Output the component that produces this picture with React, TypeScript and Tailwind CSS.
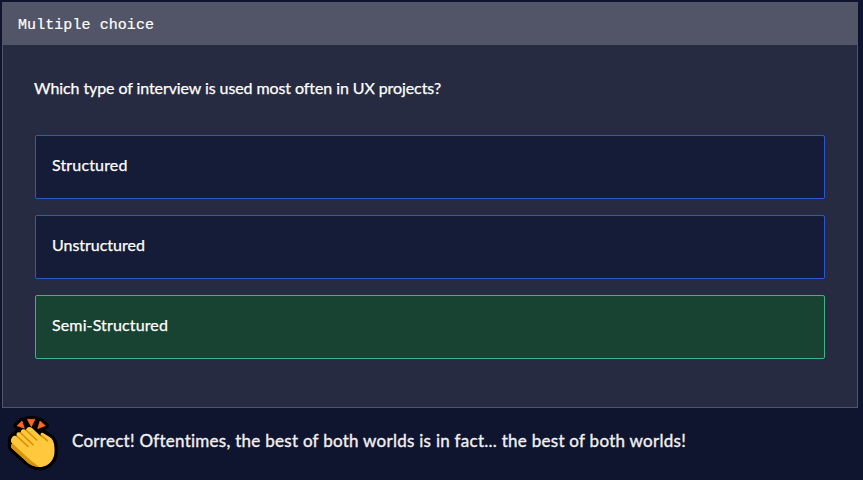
const options = [
  { label: "Structured", track: "tracking-[0.15px]", correct: false },
  { label: "Unstructured", track: "tracking-[-0.02px]", correct: false },
  { label: "Semi-Structured", track: "tracking-[0.13px]", correct: true },
];

const hand =
  "M24 77C27 70 34 70 40 74C33 65 42 57 51 63C48 54 58 48 66 55C66 46 77 42 84 48L112 74C106 65 113 59 121 65L137 75C147 81 150 91 151 103C152 117 153 131 145 143C132 163 110 170 89 161C79 158 72 153 66 147L26 111C19 105 20 98 25 95C19 90 20 82 24 77Z";

const sparks = "M39 41L54 27L61 49ZM70 22H93L82 44ZM108 27L124 41L101 50Z";

function ClapIcon() {
  return (
    <svg viewBox="0 0 180 192" className="h-16 w-[60px] shrink-0" aria-hidden="true">
      <g stroke="#000" strokeWidth="20" strokeLinejoin="round" fill="#000">
        <path d={sparks} />
        <path d={hand} />
        <path d="M50 55L66 42L98 44L120 58" />
      </g>
      <path d={sparks} fill="#ff6723" stroke="#ff6723" strokeWidth="2" strokeLinejoin="round" />
      <path d={hand} fill="#ffc83d" />
      <path
        d="M24 77C20 83 20 90 27 96L65 131C77 143 89 151 105 164C88 165 75 157 66 147L26 111C19 105 20 98 25 95C19 90 20 82 24 77Z"
        fill="#d8920b"
      />
      <path d="M24 77C20 84 24 90 30 95L62 124L68 119L27 81Z" fill="#ffc83d" />
      <path
        d="M40 74L72 103M50 63L87 98M67 55L98 84M112 71L130 86"
        fill="none"
        stroke="#d8920b"
        strokeWidth="5"
        strokeLinecap="round"
      />
    </svg>
  );
}

export default function App() {
  return (
    <main className="flex h-[480px] w-[863px] flex-col bg-[#10152f] pt-0.5 pl-0.5 font-['Lato',sans-serif] text-white">
      <section className="h-[406px] w-[856px] border border-[#515567] bg-[#272b41]">
        <header className="flex h-[42px] items-center bg-[#515567] pt-[5px] pl-[15px] font-['Liberation_Mono',monospace] text-[15px] tracking-[0.07px] [-webkit-text-stroke:0.2px_white]">
          Multiple choice
        </header>
        <div className="px-8 pt-[31px] [-webkit-text-stroke:0.25px_white]">
          <h1 className="-ml-px text-base leading-6 font-normal tracking-[-0.09px]">
            Which type of interview is used most often in UX projects?
          </h1>
          <div className="mt-[35px] flex flex-col gap-4">
            {options.map((o) => (
              <button
                key={o.label}
                className={`flex h-16 items-center rounded-xs border px-4 pb-1 text-left text-base ${o.track} ${
                  o.correct ? "border-[#3bb588] bg-[#184232]" : "border-[#2959ca] bg-[#151c37]"
                }`}
              >
                {o.label}
              </button>
            ))}
          </div>
        </div>
      </section>
      <footer className="flex items-start pt-1 pl-0.5">
        <ClapIcon />
        <p className="mt-[17px] ml-2 text-[17px] leading-6 tracking-[0.27px] text-[#f1f1f4] [-webkit-text-stroke:0.35px_#f1f1f4]">
          Correct! Oftentimes, the best of both worlds is in fact... the best of both worlds!
        </p>
      </footer>
    </main>
  );
}
